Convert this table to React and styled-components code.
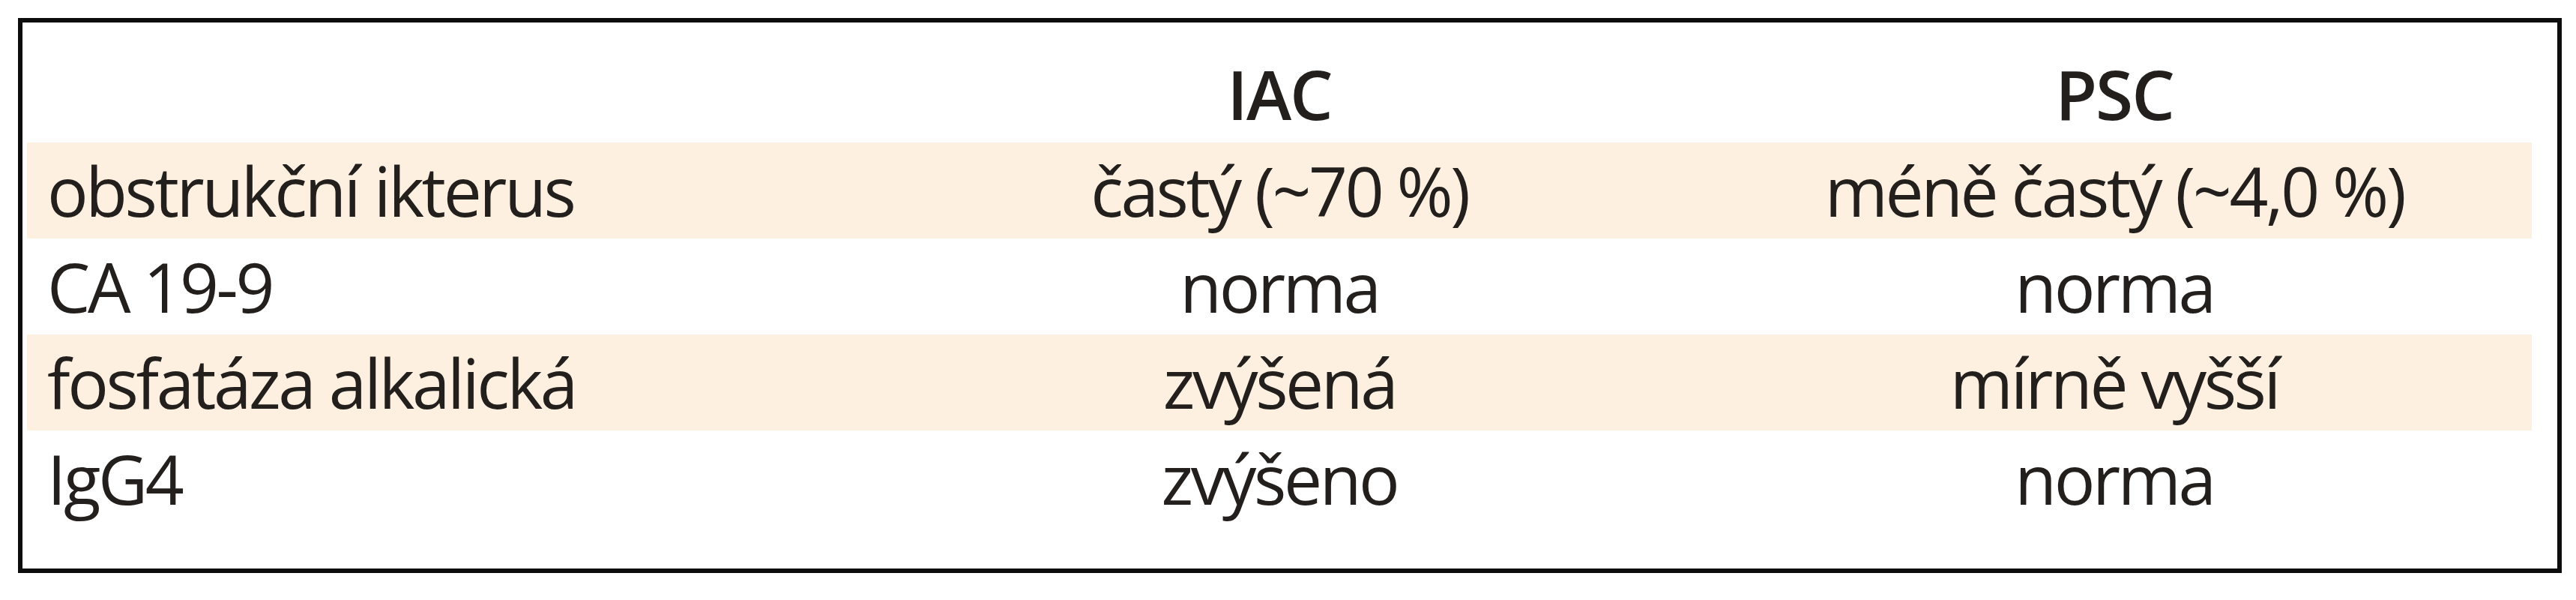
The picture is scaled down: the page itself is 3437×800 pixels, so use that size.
import React from "react";
import styled, { createGlobalStyle } from "styled-components";

const Global = createGlobalStyle`
  html, body { margin: 0; padding: 0; background: #ffffff; }
  body { font-family: "Open Sans", "Liberation Sans", sans-serif; }
`;

const Page = styled.div`
  padding: 24px 19px 36px 24px;
  background: #ffffff;
`;

const Frame = styled.div`
  border: 6px solid #0d0d0d;
  padding: 30px 34px 56px 6px;
  background: #ffffff;
`;

const Table = styled.div`
  display: flex;
  flex-direction: column;
`;

const Row = styled.div`
  display: grid;
  grid-template-columns: 1fr 1fr 1fr;
  height: ${(p) => (p.$head ? 130 : 128)}px;
  background: ${(p) => (p.$shaded ? "#fdf0e1" : "transparent")};
`;

const Cell = styled.div`
  font-family: "Open Sans", "Liberation Sans", sans-serif;
  font-size: 91px;
  line-height: ${(p) => (p.$head ? 130 : 128)}px;
  font-weight: ${(p) => (p.$head ? 600 : 400)};
  letter-spacing: ${(p) => (p.$head ? "-2px" : "-3.4px")};
  color: #231f1c;
  white-space: nowrap;
  text-align: ${(p) => (p.$left ? "left" : "center")};
  padding-left: ${(p) => (p.$left ? "27px" : "0")};
`;

const rows = [
  ["obstrukční ikterus", "častý (~70 %)", "méně častý (~4,0 %)"],
  ["CA 19-9", "norma", "norma"],
  ["fosfatáza alkalická", "zvýšená", "mírně vyšší"],
  ["IgG4", "zvýšeno", "norma"],
];

export default function App() {
  return (
    <>
      <Global />
      <Page>
        <Frame>
          <Table>
            <Row $head>
              <Cell $head $left></Cell>
              <Cell $head>IAC</Cell>
              <Cell $head>PSC</Cell>
            </Row>
            {rows.map((r, i) => (
              <Row key={i} $shaded={i % 2 === 0}>
                <Cell $left>{r[0]}</Cell>
                <Cell>{r[1]}</Cell>
                <Cell>{r[2]}</Cell>
              </Row>
            ))}
          </Table>
        </Frame>
      </Page>
    </>
  );
}
